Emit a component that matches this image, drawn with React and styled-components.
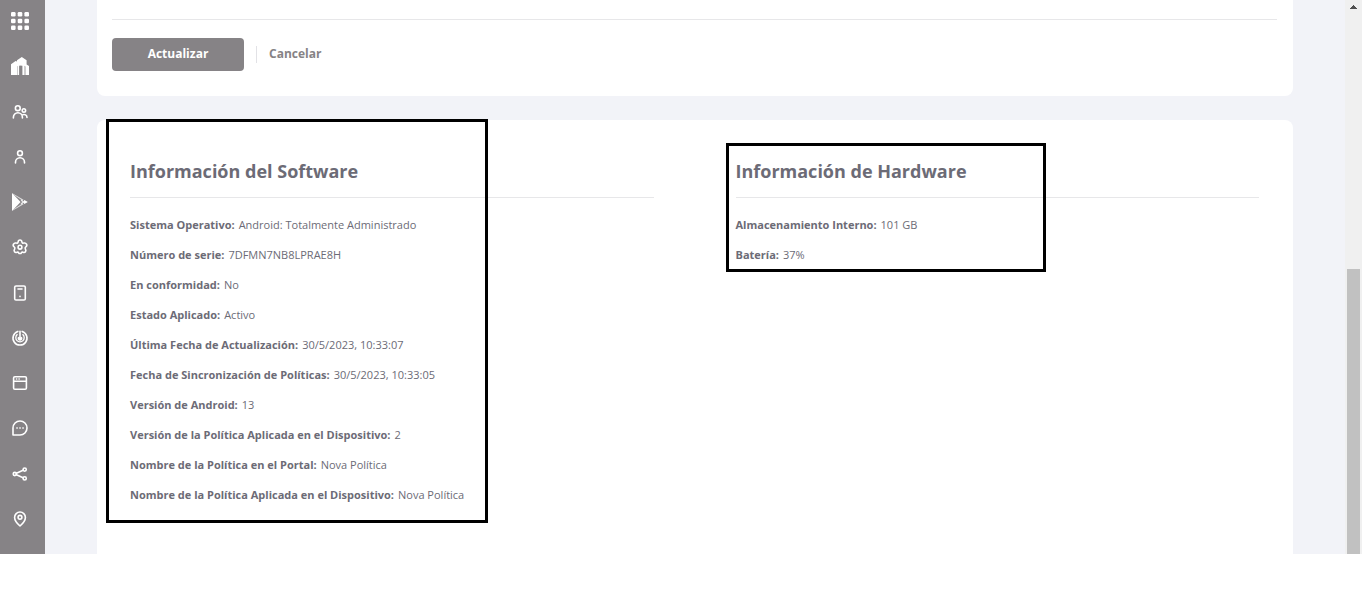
import React from "react";
import styled, { createGlobalStyle } from "styled-components";

const GlobalStyle = createGlobalStyle`
  *, *::before, *::after { box-sizing: border-box; }
  body {
    margin: 0;
    background: #fff;
    color: #6c6b76;
    font-family: "Open Sans", "Noto Sans", sans-serif;
  }
`;

const Shell = styled.div`
  display: flex;
  padding-right: 4px;
`;

const Sidebar = styled.nav`
  display: flex;
  flex: none;
  flex-direction: column;
  justify-content: space-between;
  align-items: center;
  width: 45px;
  padding: 12px 5px 26px 0;
  background: #868386;
`;

const NavLink = styled.a`
  display: block;
  width: 18px;
  height: 18px;
  color: #fff;
`;

const Glyph = styled.svg`
  display: block;
  width: 18px;
  height: 18px;
  fill: ${(p) => (p.$solid ? "currentColor" : "none")};
  stroke: ${(p) => (p.$solid ? "none" : "currentColor")};
  stroke-width: 1.6;
  stroke-linecap: round;
  stroke-linejoin: round;
`;

const Content = styled.main`
  display: flex;
  flex: 1;
  flex-direction: column;
  gap: 24px;
  min-width: 0;
  padding: 0 52px;
  background: #f2f3f8;
`;

const FormCard = styled.section`
  padding: 19px 16px 25px 15px;
  border-radius: 0 0 8px 8px;
  background: #fff;
`;

const Actions = styled.div`
  display: flex;
  align-items: center;
  padding-top: 18px;
  border-top: 1px solid #e7e7e9;
`;

const Button = styled.button`
  height: 33px;
  padding: 0 0 2px;
  border: 0;
  font: 700 12px/17px "Open Sans", "Noto Sans", sans-serif;
  cursor: pointer;
`;

const PrimaryButton = styled(Button)`
  width: 132px;
  border-radius: 4px;
  background: #868386;
  color: #fff;
`;

const TextButton = styled(Button)`
  background: transparent;
  color: #868386;
`;

const Divider = styled.span`
  width: 1px;
  height: 17px;
  margin: 0 12px;
  background: #e2e2e6;
`;

const InfoCard = styled.section`
  display: grid;
  grid-template-columns: 1fr 1fr;
  gap: 82px;
  padding: 36px 34px 44px 33px;
  border-radius: 8px 8px 0 0;
  background: #fff;
`;

const InfoColumn = styled.section`
  position: relative;
`;

const Title = styled.h2`
  margin: 0 0 12px;
  padding-bottom: 11px;
  border-bottom: 1px solid #e7e7e9;
  font-size: 18px;
  font-weight: 700;
  line-height: 30px;
`;

const Facts = styled.dl`
  margin: 0;
`;

const Fact = styled.div`
  display: flex;
  gap: 4px;
  font-size: 11px;
  line-height: 30px;
  white-space: nowrap;
`;

const Term = styled.dt`
  font-weight: 700;
`;

const Value = styled.dd`
  margin: 0;
  font-weight: 400;
`;

const Highlight = styled.div`
  position: absolute;
  top: ${(p) => p.$top}px;
  left: ${(p) => p.$left}px;
  width: ${(p) => p.$width}px;
  height: ${(p) => p.$height}px;
  border: 3px solid #000;
  pointer-events: none;
`;

const ScrollTrack = styled.div`
  display: flex;
  flex: none;
  flex-direction: column;
  justify-content: space-between;
  align-items: center;
  width: 17px;
  padding-top: 5px;
  background: #f0f0f0;
`;

const ScrollArrow = styled.svg`
  width: 7px;
  height: 4px;
  fill: #505050;
`;

const ScrollThumb = styled.div`
  width: 13px;
  height: 285px;
  background: #c1c1c1;
`;

const icons = [
  {
    label: "Menú",
    solid: true,
    art: [0, 6.7, 13.4].flatMap((y) =>
      [0, 6.7, 13.4].map((x) => (
        <rect key={`${x}-${y}`} x={x} y={y} width="4.6" height="4.6" rx="1.3" />
      ))
    ),
  },
  {
    label: "Inicio",
    solid: true,
    art: (
      <path d="M0 18V7.2L4.6 4l1.4.6V3.2L10.8 0l4.8 3.2v4.4L18 9v9h-3.6V9.4l-.8-.6V18h-2.2V8.8L8.6 8.6l-.5.6V18H7V9l-.4.3V18Z" />
    ),
  },
  {
    label: "Grupos",
    art: (
      <>
        <circle cx="6.8" cy="5.2" r="2.4" />
        <path d="M2.4 15v-.8a4.5 4.5 0 0 1 9 0v.8" />
        <circle cx="12.9" cy="7.4" r="1.7" />
        <path d="M11.8 11.7c1.8-.7 4.2.3 4.2 2.8" />
      </>
    ),
  },
  {
    label: "Usuarios",
    art: (
      <>
        <circle cx="9" cy="5.2" r="2.4" />
        <path d="M4.5 15v-.8a4.5 4.5 0 0 1 9 0v.8" />
      </>
    ),
  },
  {
    label: "Aplicaciones",
    solid: true,
    art: (
      <>
        <path d="M1 0v18l8.6-9Z" />
        <path d="m1.4.2 11.2 6.5-1 1L2 1.2ZM1.4 17.8l11.2-6.5-1-1L2 16.8Z" opacity=".7" />
        <path d="m9.6 7.4 1.6 1.6-1.6 1.6 1 1L13.2 9l-2.6-2.6Z" opacity=".8" />
        <path d="m13.4 7 3.4 2-3.4 2L12 9Z" />
      </>
    ),
  },
  {
    label: "Configuración",
    art: (
      <>
        <path d="M7.1 4c.2-2.6 3.6-2.6 3.8 0 .1 1 .9 1.4 1.8 1.1 2.6-.8 4.2 2.3 2.1 3.7-.9.6-.9 1.3-.4 2.2 1.3 2.2-.3 4.1-2.3 3.3-.8-.4-1.4-.1-1.7.5-.5 1-2.3 1-2.8 0-.3-.6-.9-.9-1.7-.5-2 .8-3.6-1.1-2.3-3.3.5-.9.5-1.6-.4-2.2C1.100 7.400 2.700 4.300 5.300 5.100c.9.3 1.700-.1 1.800-1.100Z" />
        <circle cx="9" cy="9.200" r="1.900" />
      </>
    ),
  },
  {
    label: "Dispositivos",
    art: (
      <>
        <rect x="3.7" y="2" width="10.6" height="14" rx="1.3" />
        <path d="M7 5h4M9 12.2v.4" />
      </>
    ),
  },
  {
    label: "Monitoreo",
    art: (
      <>
        <path d="M6.8 2.400a7 7 0 1 0 4.400 0" />
        <path d="M6.200 5.600a4.200 4.200 0 1 0 5.600 0" strokeWidth="1.300" />
        <path d="M9 2.200v7.400M7.500 8.700a1.600 1.600 0 1 0 3 0" />
      </>
    ),
  },
  {
    label: "Portal",
    art: (
      <>
        <rect x="2.6" y="2.7" width="12.8" height="12.6" rx="1.3" />
        <path d="M3 7.3h12M5.5 5h.2M8 5h.2" />
      </>
    ),
  },
  {
    label: "Mensajes",
    art: (
      <>
        <path d="M2 16V9a7 7 0 1 1 7 7Z" />
        <path d="M5.9 9h.3M8.9 9h.3M11.9 9h.3" />
      </>
    ),
  },
  {
    label: "Compartir",
    art: (
      <>
        <circle cx="3.8" cy="9" r="1.6" />
        <circle cx="13.7" cy="4.6" r="1.6" />
        <circle cx="13.7" cy="13.4" r="1.6" />
        <path d="m5.4 8.3 6.7-3M5.4 9.7l6.7 3" />
      </>
    ),
  },
  {
    label: "Ubicación",
    art: (
      <>
        <path d="M14.4 7.4C14.4 11.2 9 16 9 16s-5.4-4.8-5.4-8.6a5.4 5.4 0 0 1 10.8 0Z" />
        <circle cx="9" cy="7.3" r="1.9" />
      </>
    ),
  },
];

const software = [
  ["Sistema Operativo:", "Android: Totalmente Administrado"],
  ["Número de serie:", "7DFMN7NB8LPRAE8H"],
  ["En conformidad:", "No"],
  ["Estado Aplicado:", "Activo"],
  ["Última Fecha de Actualización:", "30/5/2023, 10:33:07"],
  ["Fecha de Sincronización de Políticas:", "30/5/2023, 10:33:05"],
  ["Versión de Android:", "13"],
  ["Versión de la Política Aplicada en el Dispositivo:", "2"],
  ["Nombre de la Política en el Portal:", "Nova Política"],
  ["Nombre de la Política Aplicada en el Dispositivo:", "Nova Política"],
];

const hardware = [
  ["Almacenamiento Interno:", "101 GB"],
  ["Batería:", "37%"],
];

function InfoPanel({ title, facts, children }) {
  return (
    <InfoColumn>
      <Title>{title}</Title>
      <Facts>
        {facts.map(([term, value]) => (
          <Fact key={term}>
            <Term>{term}</Term>
            <Value>{value}</Value>
          </Fact>
        ))}
      </Facts>
      {children}
    </InfoColumn>
  );
}

export default function App() {
  return (
    <>
      <GlobalStyle />
      <Shell>
        <Sidebar>
          {icons.map(({ label, solid, art }) => (
            <NavLink key={label} href="#" aria-label={label}>
              <Glyph viewBox="0 0 18 18" $solid={solid} aria-hidden="true">
                {art}
              </Glyph>
            </NavLink>
          ))}
        </Sidebar>
        <Content>
          <FormCard>
            <Actions>
              <PrimaryButton type="button">Actualizar</PrimaryButton>
              <Divider />
              <TextButton type="button">Cancelar</TextButton>
            </Actions>
          </FormCard>
          <InfoCard>
            <InfoPanel title="Información del Software" facts={software}>
              <Highlight $top={-37} $left={-24} $width={382} $height={404} />
            </InfoPanel>
            <InfoPanel title="Información de Hardware" facts={hardware}>
              <Highlight $top={-13} $left={-10} $width={320} $height={129} />
            </InfoPanel>
          </InfoCard>
        </Content>
        <ScrollTrack aria-hidden="true">
          <ScrollArrow viewBox="0 0 7 4" shapeRendering="crispEdges">
            <path d="M3 0h1v1h1v1h1v1h1v1H0V3h1V2h1V1h1Z" />
          </ScrollArrow>
          <ScrollThumb />
        </ScrollTrack>
      </Shell>
    </>
  );
}
